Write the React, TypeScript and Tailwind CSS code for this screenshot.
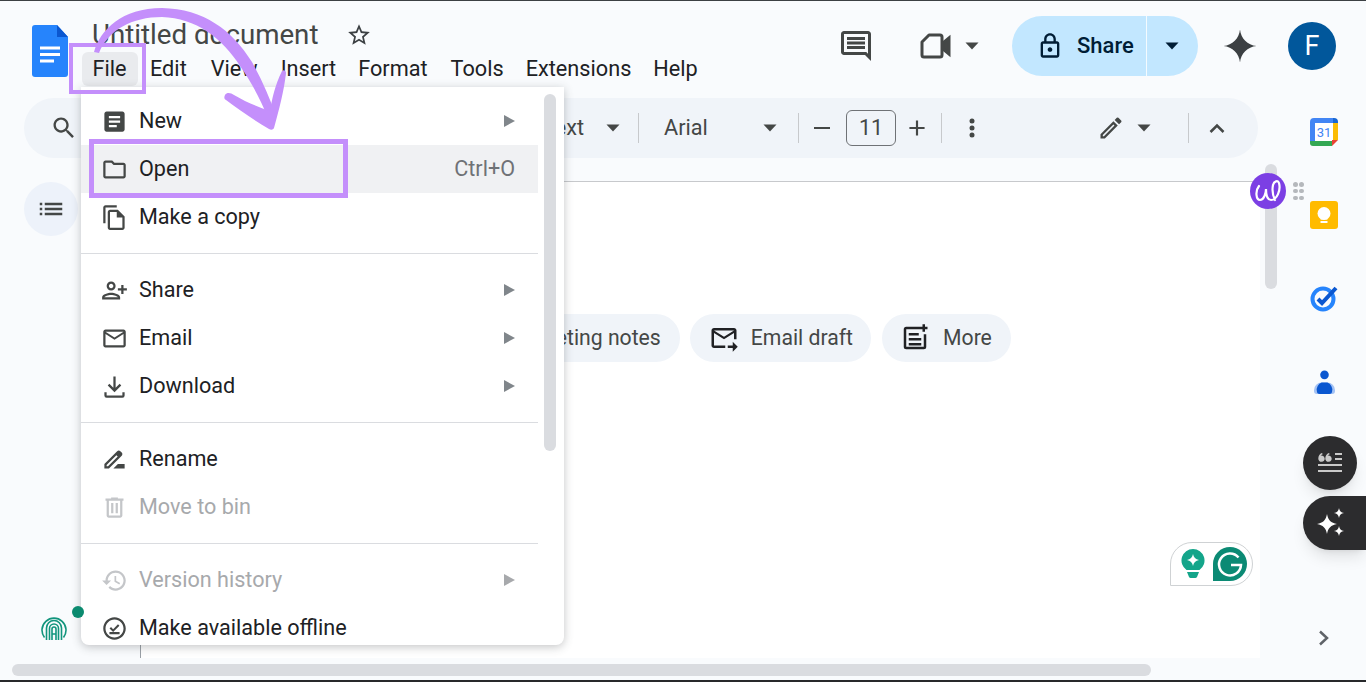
import React from "react";

const Mi = ({ d, size = 24, className = "", flip = false }: { d: string; size?: number; className?: string; flip?: boolean }) => (
  <svg width={size} height={size} viewBox="0 0 24 24" fill="currentColor" className={`shrink-0 ${flip ? "-scale-x-100" : ""} ${className}`}>
    <path d={d} />
  </svg>
);

const Caret = ({ className = "" }: { className?: string }) => (
  <svg width="14" height="8" viewBox="0 0 14 8" className={`shrink-0 ${className}`} fill="currentColor">
    <path d="M0.5 0.5h13L7 7.5z" />
  </svg>
);

const Sep = ({ className = "" }: { className?: string }) => <div className={`w-px h-[30px] bg-[#c7c9cc] shrink-0 ${className}`} />;

const P = {
  article: "M19 3H5c-1.1 0-2 .9-2 2v14c0 1.1.9 2 2 2h14c1.1 0 2-.9 2-2V5c0-1.1-.9-2-2-2zm-5 14H7v-2h7v2zm3-4H7v-2h10v2zm0-4H7V7h10v2z",
  folder: "M9.17 6l2 2H20v10H4V6h5.17M10 4H4c-1.1 0-1.99.9-1.99 2L2 18c0 1.1.9 2 2 2h16c1.1 0 2-.9 2-2V8c0-1.1-.9-2-2-2h-8l-2-2z",
  copy: "M14 1H4C2.9 1 2 1.9 2 3v14h2V3h10V1zM15 5H8C6.9 5 6 5.9 6 7v14c0 1.1.9 2 2 2h11c1.1 0 2-.9 2-2V11zM8 21V7h6v5h5v9z",
  person: "M15 12c2.21 0 4-1.79 4-4s-1.79-4-4-4-4 1.79-4 4 1.79 4 4 4zm0-6c1.1 0 2 .9 2 2s-.9 2-2 2-2-.9-2-2 .9-2 2-2zm0 8c-2.67 0-8 1.34-8 4v2h16v-2c0-2.66-5.33-4-8-4zm-6 4c.22-.72 3.31-2 6-2 2.7 0 5.8 1.29 6 2H9zm-3-3v-3h3v-2H6V7H4v3H1v2h3v3h2z",
  mail: "M20 4H4c-1.1 0-1.99.9-1.99 2L2 18c0 1.1.9 2 2 2h16c1.1 0 2-.9 2-2V6c0-1.1-.9-2-2-2zm0 14H4V8l8 5 8-5v10zm-8-7L4 6h16l-8 5z",
  download: "M11 3h2v10.17l3.59-3.58L18 11l-6 6-6-6 1.41-1.41L11 13.17zM3 17h2v3h14v-3h2v3a2 2 0 0 1-2 2H5a2 2 0 0 1-2-2z",
  rename: "M18.41 5.8L17.2 4.59c-.78-.78-2.05-.78-2.83 0l-2.68 2.68L3 15.96V20h4.04l8.74-8.74 2.63-2.63c.79-.78.79-2.05 0-2.83zM6.21 18H5v-1.21l8.66-8.66 1.21 1.21L6.21 18zM11 20l4-4h6v4H11z",
  trash: "M15 4V3H9v1H4v2h1v13c0 1.1.9 2 2 2h10c1.1 0 2-.9 2-2V6h1V4h-5zm2 15H7V6h10v13zM9 8h2v9H9zm4 0h2v9h-2z",
  history: "M13 3c-4.97 0-9 4.03-9 9H1l3.89 3.89.07.14L9 12H6c0-3.87 3.13-7 7-7s7 3.13 7 7-3.13 7-7 7c-1.93 0-3.68-.79-4.94-2.06l-1.42 1.42C8.27 19.99 10.51 21 13 21c4.97 0 9-4.03 9-9s-4.03-9-9-9zm-1 5v5l4.28 2.54.72-1.21-3.5-2.08V8H12z",
  offline: "M12 2C6.5 2 2 6.5 2 12s4.5 10 10 10 10-4.5 10-10S17.5 2 12 2zm0 18c-4.41 0-8-3.59-8-8s3.59-8 8-8 8 3.59 8 8-3.59 8-8 8zM7.500 17h9v-1.800h-9zM10.800 12.600L8.900 10.700 7.600 12l3.200 3.100 5.600-5.500-1.300-1.300z",
  star: "M22 9.24l-7.19-.62L12 2 9.19 8.63 2 9.24l5.46 4.73L5.82 21 12 17.27 18.18 21l-1.63-7.03L22 9.24zM12 15.4l-3.76 2.27 1-4.28-3.32-2.88 4.38-.38L12 6.1l1.71 4.04 4.38.38-3.32 2.88 1 4.28L12 15.4z",
  comment: "M21.99 4c0-1.1-.89-2-1.99-2H4c-1.1 0-2 .9-2 2v12c0 1.1.9 2 2 2h14l4 4-.01-18zM20 4v13.17L18.83 16H4V4h16zM6 12h12v2H6zm0-3h12v2H6zm0-3h12v2H6z",
  lock: "M18 8h-1V6c0-2.76-2.24-5-5-5S7 3.24 7 6v2H6c-1.1 0-2 .9-2 2v10c0 1.1.9 2 2 2h12c1.1 0 2-.9 2-2V10c0-1.1-.9-2-2-2zM9 6c0-1.66 1.34-3 3-3s3 1.34 3 3v2H9V6zm9 14H6V10h12v10zm-6-3c1.1 0 2-.9 2-2s-.9-2-2-2-2 .9-2 2 .9 2 2 2z",
  spark: "M12 1C12.6 7 17 11.4 23 12 17 12.6 12.6 17 12 23 11.4 17 7 12.6 1 12 7 11.4 11.4 7 12 1Z",
  list: "M3 13h2v-2H3v2zm0 4h2v-2H3v2zm0-8h2V7H3v2zm4 4h14v-2H7v2zm0 4h14v-2H7v2zM7 7v2h14V7H7z",
  search: "M15.5 14h-.79l-.28-.27C15.41 12.59 16 11.11 16 9.5 16 5.91 13.09 3 9.5 3S3 5.91 3 9.5 5.91 16 9.5 16c1.61 0 3.09-.59 4.23-1.57l.27.28v.79l5 4.99L20.49 19l-4.99-5zm-6 0C7.01 14 5 11.99 5 9.5S7.01 5 9.5 5 14 7.01 14 9.5 11.99 14 9.5 14z",
  forward: "M20 4H4c-1.1 0-2 .9-2 2v12c0 1.1.9 2 2 2h9v-2H4V8l8 5 8-5v5h2V6c0-1.1-.9-2-2-2zm-8 7L4 6h16l-8 5zm7 4l4 4-4 4v-3h-4v-2h4v-3z",
  more: "M17 3H5a2 2 0 0 0-2 2v14a2 2 0 0 0 2 2h14a2 2 0 0 0 2-2V9h-2v10H5V5h12zM20 1h-2v2h-2v2h2v2h2V5h2V3h-2zM7 8h8v2H7zM7 12h10v2H7zM7 16h10v2H7z",
  pencil: "M3 17.25V21h3.75L17.81 9.94l-3.75-3.75L3 17.25zM5.92 19H5v-.92l9.06-9.06.92.92L5.92 19zM20.71 7.04c.39-.39.39-1.02 0-1.41l-2.34-2.34a.996.996 0 0 0-1.41 0l-1.83 1.83 3.75 3.75 1.83-1.83z",
};

const Row = ({ icon, label, sub, right, hover, disabled, flip }: { icon: string; label: string; sub?: boolean; right?: string; hover?: boolean; disabled?: boolean; flip?: boolean }) => (
  <div className={`flex items-center h-12 pl-[21px] pr-[23px] gap-[13px] ${hover ? "bg-[#f0f1f3]" : ""} ${disabled ? "text-[#a7a9ac]" : "text-[#202124]"}`}>
    <span className={`w-6 h-6 flex items-center justify-center shrink-0 ${disabled ? "text-[#c4c6c9]" : "text-[#444746]"}`}>
      <Mi d={icon} size={27} flip={flip} />
    </span>
    <span className="flex-1 text-[21.6px] leading-none whitespace-nowrap">{label}</span>
    {right && <span className="text-[21.6px] leading-none text-[#6f7276]">{right}</span>}
    {sub && (
      <svg width="11" height="12" viewBox="0 0 11 12" fill="currentColor" className={disabled ? "text-[#a7a9ac]" : "text-[#80868b]"}>
        <path d="M0 0l11 6-11 6z" />
      </svg>
    )}
  </div>
);

const Divider = () => <div className="h-px bg-[#dadce0] my-3" />;

const Chip = ({ icon, label, className = "" }: { icon: string; label: string; className?: string }) => (
  <div className={`flex items-center h-12 rounded-full bg-[#f0f4f9] text-[#444746] shrink-0 ${className}`}>
    <Mi d={icon} size={30} className="text-[#202124]" />
    <span className="text-[21.2px] leading-none whitespace-nowrap">{label}</span>
  </div>
);

export default function App() {
  return (
    <div className="relative w-[1366px] h-[682px] overflow-hidden flex flex-col bg-[#f9fbfd] font-['Roboto',sans-serif]">
      <div className="h-px bg-[#3c4043] shrink-0" />

      {/* Header */}
      <header className="h-[97px] shrink-0 flex items-start">
        <svg width="36" height="52" viewBox="0 0 36 52" className="ml-8 mt-6 shrink-0">
          <path d="M3 0h22l11 12v37a3 3 0 0 1-3 3H3a3 3 0 0 1-3-3V3a3 3 0 0 1 3-3z" fill="#2684fc" />
          <path d="M25 0l11 12H25z" fill="#0b57d0" />
          <path d="M8 21.5h20v3H8zM8 28h20v3H8zM8 34.5h14v3H8z" fill="#fff" />
        </svg>
        <div className="ml-6 shrink-0 flex flex-col">
          <div className="flex items-center h-[38px] mt-[15px]">
            <span className="text-[27.7px] leading-none text-[#444746] whitespace-nowrap">Untitled document</span>
            <Mi d={P.star} size={26} className="ml-[28px] text-[#3c4043]" />
          </div>
          <nav className="flex items-center text-[21.7px] leading-none text-[#202124] -mt-[2px] -ml-[10px] h-[34px] whitespace-nowrap">
            <span className="bg-[#e9ebee] rounded-md h-[34px] w-[56px] flex items-center justify-center pr-px">File</span>
            <span className="ml-[12px]">Edit</span>
            <span className="ml-[24px]">View</span>
            <span className="ml-[23px]">Insert</span>
            <span className="ml-[22px]">Format</span>
            <span className="ml-[23px]">Tools</span>
            <span className="ml-[22px]">Extensions</span>
            <span className="ml-[22px]">Help</span>
          </nav>
        </div>
        <div className="flex-1" />
        <div className="flex items-center h-[60px] mt-[15px] pr-[30px] shrink-0">
          <Mi d={P.comment} size={36} className="text-[#444746]" />
          <svg width="31" height="26" viewBox="0 0 31 26" className="ml-[46px] text-[#444746]" fill="none" stroke="currentColor" strokeWidth="3">
            <path d="M9 2h11a2 2 0 0 1 2 2v18a2 2 0 0 1-2 2H4a2 2 0 0 1-2-2V9z" strokeLinejoin="round" />
            <path d="M23 10l6-5v16l-6-5z" fill="currentColor" />
          </svg>
          <Caret className="ml-[14px] text-[#444746]" />
          <div className="ml-[33px] w-[186px] h-[60px] rounded-full bg-[#c2e7ff] flex items-center text-[#001d35]">
            <Mi d={P.lock} size={28} className="ml-[24px]" />
            <span className="ml-[13px] text-[22px] leading-none font-medium">Share</span>
            <div className="ml-[12px] w-px h-[60px] bg-[#f4fbff]" />
            <Caret className="ml-[18px]" />
          </div>
          <Mi d={P.spark} size={36} className="ml-6 text-[#3c4043]" />
          <div className="ml-[30px] w-12 h-12 rounded-full bg-[#01579b] text-white flex items-center justify-center text-[27px] leading-none">F</div>
        </div>
      </header>

      {/* Workspace */}
      <div className="flex-1 flex min-h-0">
        <div className="w-[1260px] flex flex-col shrink-0">
          {/* Toolbar */}
          <div className="ml-6 w-[1234px] h-[60px] rounded-full bg-[#f0f4f9] flex items-center text-[#444746] shrink-0">
            <Mi d={P.search} size={28} className="ml-[26px] text-[#444746]" />
            <div className="flex-1" />
            <span className="text-[21.7px] leading-none whitespace-nowrap">Normal text</span>
            <Caret className="ml-[22px]" />
            <Sep className="ml-[18px]" />
            <span className="ml-[25px] text-[21.7px] leading-none w-[99px]">Arial</span>
            <Caret />
            <Sep className="ml-[21px]" />
            <div className="ml-[15px] w-4 h-[2.5px] bg-[#444746]" />
            <div className="ml-[16px] w-[50px] h-[36px] rounded-md border border-[#6f7276] flex items-center justify-center text-[21.5px] leading-none">11</div>
            <Mi d="M19 13h-6v6h-2v-6H5v-2h6V5h2v6h6v2z" size={26} className="ml-[8px]" />
            <Sep className="ml-[11px]" />
            <svg width="6" height="20" viewBox="0 0 6 20" fill="currentColor" className="ml-[27px]">
              <circle cx="3" cy="3" r="2.5" /><circle cx="3" cy="10" r="2.5" /><circle cx="3" cy="17" r="2.5" />
            </svg>
            <Mi d={P.pencil} size={28} className="ml-[122px]" />
            <Caret className="ml-[12px]" />
            <Sep className="ml-[37px]" />
            <svg width="16" height="10" viewBox="0 0 16 10" fill="none" stroke="currentColor" strokeWidth="2.5" className="ml-[20px]">
              <path d="M1.5 9L8 2.5 14.5 9" />
            </svg>
            <div className="w-[33px] shrink-0" />
          </div>
          <div className="h-[23px] shrink-0" />
          {/* Document */}
          <div className="flex-1 flex min-h-0">
            <div className="w-[140px] shrink-0 flex flex-col">
              <div className="ml-6 mt-px w-[54px] h-[54px] rounded-full bg-[#edf2fa] flex items-center justify-center text-[#444746]">
                <Mi d={P.list} size={30} />
              </div>
              <div className="flex-1" />
              <svg width="26" height="26" viewBox="0 0 26 26" fill="none" stroke="#12957d" strokeWidth="1.6" className="ml-[41px] mb-[17px]">
                <path d="M3.500 22.500A12 12 0 1 1 22.500 22.500" />
                <path d="M5.500 25V13a7.500 7.500 0 0 1 15 0v12" />
                <path d="M8.500 25V13.500a4.500 4.500 0 0 1 9 0V25" />
                <path d="M11 25V14a2 2 0 0 1 4 0v11M11 19h4" />
              </svg>
            </div>
            <div className="flex-1 flex flex-col min-w-0">
              <div className="flex-1 bg-white border-t border-l border-t-[#c7c9cc] border-l-[#9aa0a6] flex flex-col relative">
                <div className="mt-[132px] flex gap-[10px] pl-[326px]">
                  <Chip icon={P.article} label="Meeting notes" className="pl-[17px] pr-[19px] gap-[12px]" />
                  <Chip icon={P.forward} label="Email draft" className="pl-[19px] pr-[18px] gap-[12px]" />
                  <Chip icon={P.more} label="More" className="ml-px pl-[18px] pr-[19px] gap-[13px]" />
                </div>
                {/* Grammarly */}
                <div className="absolute left-[1029px] top-[360px] w-[83px] h-[44px] bg-white border border-[#cfd2d4] rounded-[22px] rounded-bl-none flex items-center justify-between pl-[10px] pr-[5px]">
                  <svg width="24" height="30" viewBox="0 0 24 30">
                    <path d="M12 0a11.500 11.500 0 0 1 6.500 21h-13A11.500 11.500 0 0 1 12 0z" fill="#14a58a" />
                    <path d="M12 5c.6 3.400 2.600 5.400 6 6-3.400.6-5.400 2.600-6 6-.6-3.400-2.600-5.400-6-6 3.400-.6 5.400-2.600 6-6z" fill="#fff" />
                    <path d="M6 23h12l-2 5a2 2 0 0 1-2 1h-4a2 2 0 0 1-2-1z" fill="#14a58a" />
                  </svg>
                  <svg width="34" height="34" viewBox="0 0 34 34">
                    <path d="M17 0a17 17 0 0 1 0 34H0V17A17 17 0 0 1 17 0z" fill="#0b8a74" />
                    <path d="M25.500 10.500A11 11 0 1 0 28 18H18" fill="none" stroke="#fff" strokeWidth="2.500" />
                  </svg>
                </div>
              </div>
            </div>
          </div>
          <div className="h-[6px] shrink-0" />
          <div className="ml-3 w-[1139px] h-3 rounded-full bg-[#dadce0] shrink-0" />
          <div className="h-1 shrink-0" />
        </div>

        {/* Side panel */}
        <aside className="flex-1 flex flex-col items-center pl-[44px] pr-[22px] pt-5">
          <svg width="28" height="28" viewBox="0 0 28 28" className="shrink-0">
            <path d="M4 0h20v5H5v18H0V4a4 4 0 0 1 4-4z" fill="#4285f4" />
            <rect x="5" y="5" width="18" height="18" fill="#fff" />
            <path d="M23 0h1a4 4 0 0 1 4 4v1h-5z" fill="#1967d2" />
            <path d="M23 5h5v17h-5z" fill="#fbbc04" />
            <path d="M0 23h22v5H3a3 3 0 0 1-3-3z" fill="#34a853" />
            <path d="M22 28v-6h6z" fill="#ea4335" />
            <text x="14" y="19" textAnchor="middle" fontSize="13" fill="#4285f4" fontFamily="Roboto, sans-serif">31</text>
          </svg>
          <svg width="28" height="28" viewBox="0 0 28 28" className="mt-[55px] shrink-0">
            <rect width="28" height="28" rx="3" fill="#ffbb00" />
            <circle cx="14" cy="12.500" r="6.500" fill="#fff" />
            <rect x="10.500" y="16" width="7" height="2.500" fill="#fff" />
            <rect x="10.500" y="20" width="7" height="2" fill="#fff" />
          </svg>
          <svg width="28" height="28" viewBox="0 0 28 28" className="mt-[55px] shrink-0" fill="none">
            <circle cx="13" cy="15" r="10.500" stroke="#2684fc" strokeWidth="4" />
            <path d="M8 15l4 4L26 4" stroke="#0b57d0" strokeWidth="4" />
          </svg>
          <svg width="21" height="25" viewBox="0 0 22 26" className="mt-[58px] shrink-0">
            <circle cx="11" cy="5" r="4.500" fill="#0b57d0" />
            <path d="M0 21a8 8 0 0 1 8-8h6a8 8 0 0 1 8 8v1a3 3 0 0 1-3 3H3a3 3 0 0 1-3-3z" fill="#a4c2f4" />
            <path d="M3 22a8 8 0 0 1 5-9h6a8 8 0 0 1 5 9 3 3 0 0 1-3 3H6a3 3 0 0 1-3-3z" fill="#0b57d0" />
          </svg>
          <div className="flex-1" />
          <svg width="12" height="16" viewBox="0 0 12 16" fill="none" stroke="#5f6368" strokeWidth="2.500" className="mb-[34px] shrink-0">
            <path d="M2 1.500L9 8l-7 6.500" />
          </svg>
        </aside>
      </div>
      <div className="h-[2px] bg-[#28292b] shrink-0" />

      {/* Doc scrollbar */}
      <div className="absolute left-[1265px] top-[164px] w-3 h-[125px] rounded-full bg-[#dadce0]" />

      {/* Wordtune */}
      <div className="absolute left-[1250px] top-[173px] w-9 h-9 rounded-full bg-[#7c3fe4] flex items-center justify-center">
        <svg width="30" height="26" viewBox="0 0 30 26" fill="none" stroke="#fff" strokeWidth="2.2" strokeLinecap="round">
          <path d="M6 8C2 13 3 22 7 22c4 0 6-7 6-11 0 6 1 11 5 11 6 0 10-10 8-17-1-3-5-2-6 2-1 5 0 11 2 15" />
        </svg>
      </div>
      <div className="absolute left-[1293px] top-[182px] grid grid-cols-2 gap-x-[1.5px] gap-y-[2.25px]">
        {[0, 1, 2, 3, 4, 5].map((i) => (
          <div key={i} className="w-[4.5px] h-[4.5px] rounded-full bg-[#b5b8bc]" />
        ))}
      </div>

      {/* Floating dark buttons */}
      <div className="absolute left-[1303px] top-[436px] w-[54px] h-[54px] rounded-full bg-[#2c2c2e] shadow-lg flex items-center justify-center">
        <svg width="26" height="24" viewBox="0 0 26 24" fill="#c9c9c9">
          <path d="M4.500 2L6 3C4.500 3.800 3.800 4.200 3.600 4.600A3.200 3.200 0 1 1 1.300 7.500C1.300 5 2.600 3 4.500 2zM11.500 2L13 3C11.500 3.800 10.800 4.200 10.600 4.600A3.200 3.200 0 1 1 8.300 7.500C8.300 5 9.600 3 11.500 2z" />
          <path d="M18 2h7v2h-7zM18 7h7v2h-7zM1 13h24v2H1zM1 19h24v2H1z" />
        </svg>
      </div>
      <div className="absolute left-[1303px] top-[496px] w-[63px] h-[54px] rounded-l-full bg-[#2c2c2e] shadow-lg flex items-center pl-[12px]">
        <svg width="32" height="32" viewBox="0 0 32 32" fill="#fff">
          <path d="M12 7c1 6 4 9 10 10-6 1-9 4-10 10-1-6-4-9-10-10 6-1 9-4 10-10zM24 1c.5 3 2 4.500 5 5-3 .5-4.500 2-5 5-.5-3-2-4.500-5-5 3-.5 4.500-2 5-5zM24 19c.5 3 2 4.500 5 5-3 .5-4.500 2-5 5-.5-3-2-4.500-5-5 3-.5 4.500-2 5-5z" />
        </svg>
      </div>

      {/* File menu */}
      <div className="absolute left-[81px] top-[87px] w-[483px] h-[558px] bg-white rounded-b-lg shadow-[0_2px_10px_rgba(60,64,67,0.3)] overflow-hidden">
        <div className="w-[457px] pt-[10px]">
          <Row icon={P.article} label="New" sub />
          <Row icon={P.folder} label="Open" right="Ctrl+O" hover />
          <Row icon={P.copy} label="Make a copy" />
          <Divider />
          <Row icon={P.person} label="Share" sub flip />
          <Row icon={P.mail} label="Email" sub />
          <Row icon={P.download} label="Download" sub />
          <Divider />
          <Row icon={P.rename} label="Rename" />
          <Row icon={P.trash} label="Move to bin" disabled />
          <Divider />
          <Row icon={P.history} label="Version history" sub disabled />
          <Row icon={P.offline} label="Make available offline" />
        </div>
        <div className="absolute left-[463px] top-[7px] w-3 h-[357px] rounded-full bg-[#dadce0]" />
      </div>
      <div className="absolute left-[78px] top-[612px] -translate-x-1/2 -translate-y-1/2 w-3 h-3 rounded-full bg-[#0b8a6f]" />

      {/* Annotations */}
      <div className="absolute left-[69px] top-[43px] w-[77px] h-[51px] border-4 border-[#c48ffb]" />
      <div className="absolute left-[89px] top-[139px] w-[259px] h-[59px] border-[5px] border-[#c48ffb]" />
      <svg className="absolute left-0 top-0 pointer-events-none" width="320" height="140" viewBox="0 0 320 140" fill="#c48ffb">
        <path d="M94 52C100 30 122 8 162 8 204 9 232 30 252 62 262 80 270 98 276 116L268 118C260 98 250 80 240 66 222 38 196 18 162 17 132 17 108 30 99 53z" />
        <path d="M225 95c2-3 6-2 9 0 12 7 24 12 36 16 2-12 5-26 12-40 2-2 4 0 4 2-2 18-7 37-12 55-1 2-3 2-5 1-15-9-30-19-43-29-2-1-2-3-1-5z" />
      </svg>
    </div>
  );
}
